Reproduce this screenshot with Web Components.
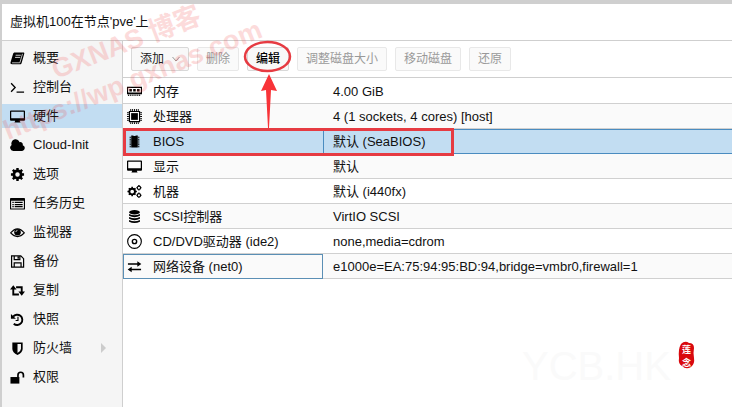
<!DOCTYPE html>
<html lang="zh-CN">
<head>
<meta charset="utf-8">
<meta name="viewport" content="width=device-width, initial-scale=1">
<title>虚拟机100 - 硬件</title>
<style>
  body {
    margin: 0;
    font: 13px/24px "Liberation Sans", "Noto Sans CJK SC", sans-serif;
    color: #111;
    background: #fff;
  }
</style>
</head>
<body>
<kt-vm-panel heading="虚拟机100在节点'pve'上">
  <kt-side-nav slot="nav">
    <kt-nav-item icon="book">概要</kt-nav-item>
    <kt-nav-item icon="terminal">控制台</kt-nav-item>
    <kt-nav-item icon="desktop" active>硬件</kt-nav-item>
    <kt-nav-item icon="cloud">Cloud-Init</kt-nav-item>
    <kt-nav-item icon="gear">选项</kt-nav-item>
    <kt-nav-item icon="list">任务历史</kt-nav-item>
    <kt-nav-item icon="eye">监视器</kt-nav-item>
    <kt-nav-item icon="floppy">备份</kt-nav-item>
    <kt-nav-item icon="retweet">复制</kt-nav-item>
    <kt-nav-item icon="history">快照</kt-nav-item>
    <kt-nav-item icon="shield" expandable>防火墙</kt-nav-item>
    <kt-nav-item icon="unlock">权限</kt-nav-item>
  </kt-side-nav>
  <kt-toolbar slot="toolbar">
    <kt-button menu>添加</kt-button>
    <kt-button disabled>删除</kt-button>
    <kt-button strong>编辑</kt-button>
    <kt-button disabled>调整磁盘大小</kt-button>
    <kt-button disabled>移动磁盘</kt-button>
    <kt-button disabled>还原</kt-button>
  </kt-toolbar>
  <kt-hardware-grid></kt-hardware-grid>
</kt-vm-panel>
<kt-annotations></kt-annotations>

<script>
const icons = {
  book: `<path d="M5 1.500h9.200c.9 0 1.200.6 1 1.300l-2.800 10c-.2.8-.8 1.400-1.700 1.400H2.200C.8 14.200.2 13 .6 12L3.300 3c.3-.9.8-1.500 1.700-1.500z"/><path d="M6 4.500h5.500M5.400 6.800h5.500" stroke="#f5f5f5" stroke-width=".9"/><path d="M2.200 12.600h8.300L13.300 3" stroke="#f5f5f5" stroke-width=".8" fill="none"/>`,
  terminal: `<path d="M1.200 3.500 5.500 8l-4.300 4.500M7 13h8" fill="none" stroke="currentColor" stroke-width="1.400"/>`,
  desktop: `<path fill-rule="evenodd" d="M1 1.500h14q1 0 1 1v9q0 1-1 1h-4.500c0 1 .7 1 .7 2H4.800c0-1 .7-1 .7-2H1q-1 0-1-1v-9q0-1 1-1zm.3 1.300v7h13.400v-7z"/>`,
  cloud: `<path d="M3.500 13.800A3.500 3.500 0 0 1 1.700 7.400 4.500 4.500 0 0 1 10.200 4.400 2.700 2.700 0 0 1 13.600 7.600 3.200 3.200 0 0 1 13 13.800z"/>`,
  gear: `<circle cx="8" cy="8" r="3.900" fill="none" stroke="currentColor" stroke-width="3"/><path d="M8 1v2.500M8 12.500V15M1 8h2.500M12.500 8H15M3 3l2 2M11 11l2 2M13 3l-2 2M5 11l-2 2" stroke="currentColor" stroke-width="2.600"/>`,
  list: `<path fill-rule="evenodd" d="M1 2h14q1 0 1 1v10.500q0 1-1 1H1q-1 0-1-1V3q0-1 1-1zm.2 3v8.300h13.600V5z"/><path d="M2.500 6.800h1.500M5 6.800h8.500M2.500 9.100H4M5 9.100h8.500M2.500 11.400H4M5 11.400h8.500" stroke="currentColor" stroke-width="1.300"/>`,
  eye: `<path d="M.7 8.500Q8-.2 15.300 8.500 8 16.300.7 8.500z" fill="none" stroke="currentColor" stroke-width="1.200"/><circle cx="8" cy="7.700" r="3.500"/><path d="M6.200 7.500A2 2 0 0 1 8 5.700" fill="none" stroke="#fff" stroke-width=".8"/>`,
  floppy: `<path d="M1.700 2h9.800l3 3v9H1.700zM4.500 2v4h6V2M4.500 14V9.500h7.300V14" fill="none" stroke="currentColor" stroke-width="1.300"/><path d="M8 2.500h1.500v2.500H8z"/>`,
  retweet: `<path d="M3.500 5.500v6.800h6M6.500 4.500h6v6" fill="none" stroke="currentColor" stroke-width="2"/><path d="M3.500 2.500 7 7H0zM12.500 13.500 9 9h7z"/>`,
  history: `<path d="M3.300 5A5.500 5.500 0 1 1 4 12.500" fill="none" stroke="currentColor" stroke-width="2"/><path d="M1 2v5.300h5.300z"/><path d="M8.500 5v4H6" fill="none" stroke="currentColor" stroke-width="1.200"/>`,
  shield: `<path fill-rule="evenodd" d="M2.500 1.500h11v7q0 3.500-5.500 6.500-5.500-3-5.500-6.500zm5.500 1.800v9.600q3.700-2.300 3.700-4.600v-5z"/>`,
  unlock: `<path d="M.5 7.500h9.500v7H.5z"/><path d="M8.500 8V5.300a2.900 2.900 0 0 1 5.800 0V8" fill="none" stroke="currentColor" stroke-width="1.800"/>`,
  memory: `<path fill-rule="evenodd" d="M0 3h16v8H0zm1.200 1.200v4.800h13.600V4.200z"/><path d="M2.500 5.200h2.700v2.700H2.500zM6.600 5.200h2.700v2.700H6.600zM10.700 5.200h2.700v2.700h-2.700z"/><path d="M1 12h14" stroke="currentColor" stroke-width="1.500" stroke-dasharray="1 1"/>`,
  cpu: `<path fill-rule="evenodd" d="M2 2h12v12H2zm1.200 1.200v9.600h9.600V3.200z"/><path d="M4.400 4.400h7.200v7.200H4.400z"/><path d="M3.500 1h10M3.500 15h10M1 3.500v10M15 3.500v10" stroke="currentColor" stroke-width="2" stroke-dasharray="1 1"/>`,
  chip: `<path d="M4.500 1.500h2q1.500 1.500 3 0h2v13h-7z"/><path d="M3.500 3v11M12.500 3v11" stroke="currentColor" stroke-width="1.500" stroke-dasharray="1 1"/>`,
  gears: `<circle cx="5.500" cy="8" r="3" fill="none" stroke="currentColor" stroke-width="2"/><path d="M5.500 3v2M5.500 11v2M.5 8h2M8.500 8h2M2 4.500l1.300 1.300M7.700 10.200 9 11.500M9 4.500 7.700 5.800M3.300 10.200 2 11.500" stroke="currentColor" stroke-width="1.700"/><circle cx="12.700" cy="4" r="1.800" fill="none" stroke="currentColor" stroke-width="1.200"/><circle cx="12.700" cy="12" r="1.800" fill="none" stroke="currentColor" stroke-width="1.200"/><path d="M12.700 1v1M12.700 6v1M12.700 9v1M12.700 14v1M10 4h1M14.500 4h1M10 12h1M14.500 12h1" stroke="currentColor" stroke-width="1.300"/>`,
  database: `<ellipse cx="8" cy="3.500" rx="5.800" ry="2.400"/><path d="M2.200 5.300q5.800 2.800 11.600 0v2q-5.800 2.800-11.600 0zM2.200 8.500q5.800 2.800 11.600 0v2q-5.800 2.800-11.600 0zM2.200 11.700q5.800 2.800 11.600 0v1.800q-5.800 2.800-11.600 0z"/>`,
  disc: `<circle cx="8" cy="8" r="7.300" fill="none" stroke="currentColor" stroke-width="1.200"/><circle cx="8" cy="8" r="2.300" fill="none" stroke="currentColor" stroke-width="1.500"/>`,
  exchange: `<path d="M1 5.300h11M4 11.200h11" stroke="currentColor" stroke-width="1.700"/><path d="M11 2.300 15.300 5.300 11 8.300zM5 8.200.7 11.200 5 14.200z"/>`
};

// name, icon, value
const hardware = [
  { name: "内存", icon: "memory", value: "4.00 GiB" },
  { name: "处理器", icon: "cpu", value: "4 (1 sockets, 4 cores) [host]" },
  { name: "BIOS", icon: "chip", value: "默认 (SeaBIOS)", state: "selected" },
  { name: "显示", icon: "desktop", value: "默认" },
  { name: "机器", icon: "gears", value: "默认 (i440fx)" },
  { name: "SCSI控制器", icon: "database", value: "VirtIO SCSI" },
  { name: "CD/DVD驱动器 (ide2)", icon: "disc", value: "none,media=cdrom" },
  { name: "网络设备 (net0)", icon: "exchange", value: "e1000e=EA:75:94:95:BD:94,bridge=vmbr0,firewall=1", state: "focused" }
];

class Icon extends HTMLElement {
  connectedCallback() {
    const shadow = this.attachShadow({ mode: "open" });
    shadow.innerHTML = `
      <style>
        :host { display: block; flex: none; width: 15px; height: 15px; color: #000; }
        svg { display: block; width: 100%; height: 100%; fill: currentColor; }
      </style>
      <svg viewBox="0 0 16 16" aria-hidden="true">${icons[this.getAttribute("name")]}</svg>
    `;
  }
}
customElements.define("kt-icon", Icon);

const panelTemplate = document.createElement("template");
panelTemplate.innerHTML = `
  <style>
    :host {
      display: flex;
      flex-direction: column;
      box-sizing: border-box;
      min-height: 100vh;
      border-top: 4px solid #cfcfcf;
      border-left: 2px solid #cfcfcf;
    }
    h1 {
      margin: 0;
      padding: 6px 8px;
      font: inherit;
      border-bottom: 1px solid #cfcfcf;
    }
    .body {
      flex: auto;
      display: flex;
    }
    main {
      flex: 1;
      min-width: 0;
    }
  </style>
  <h1></h1>
  <div class="body">
    <slot name="nav"></slot>
    <main>
      <slot name="toolbar"></slot>
      <slot></slot>
    </main>
  </div>
`;

class VmPanel extends HTMLElement {
  constructor() {
    super();
    const shadow = this.attachShadow({ mode: "open" });
    shadow.appendChild(panelTemplate.content.cloneNode(true));
  }

  connectedCallback() {
    this.shadowRoot.querySelector("h1").textContent = this.getAttribute("heading");
  }
}
customElements.define("kt-vm-panel", VmPanel);

const navTemplate = document.createElement("template");
navTemplate.innerHTML = `
  <style>
    :host {
      display: block;
      flex: none;
      width: 120px;
      background: #f5f5f5;
      border-right: 1px solid #cfcfcf;
    }
    nav {
      display: flex;
      flex-direction: column;
      gap: 5px;
      padding: 5px 0;
    }
  </style>
  <nav><slot></slot></nav>
`;

class SideNav extends HTMLElement {
  constructor() {
    super();
    const shadow = this.attachShadow({ mode: "open" });
    shadow.appendChild(navTemplate.content.cloneNode(true));
  }
}
customElements.define("kt-side-nav", SideNav);

class NavItem extends HTMLElement {
  connectedCallback() {
    const shadow = this.attachShadow({ mode: "open" });
    shadow.innerHTML = `
      <style>
        :host { display: block; }
        :host([active]) { background: #c2ddf2; }
        a {
          display: flex;
          align-items: center;
          gap: 8px;
          height: 24px;
          padding: 0 16px 0 8px;
          color: inherit;
          text-decoration: none;
        }
        span { flex: auto; }
        i {
          border: 5px solid transparent;
          border-left-color: #ccc;
          border-right: 0;
        }
      </style>
      <a href="#${this.getAttribute("icon")}">
        <kt-icon name="${this.getAttribute("icon")}"></kt-icon>
        <span><slot></slot></span>
        ${this.hasAttribute("expandable") ? "<i></i>" : ""}
      </a>
    `;
  }
}
customElements.define("kt-nav-item", NavItem);

const toolbarTemplate = document.createElement("template");
toolbarTemplate.innerHTML = `
  <style>
    :host {
      display: flex;
      flex-wrap: wrap;
      gap: 8px;
      padding: 6px 8px;
      border-bottom: 1px solid #cfcfcf;
    }
  </style>
  <slot></slot>
`;

class Toolbar extends HTMLElement {
  constructor() {
    super();
    const shadow = this.attachShadow({ mode: "open" });
    shadow.appendChild(toolbarTemplate.content.cloneNode(true));
  }
}
customElements.define("kt-toolbar", Toolbar);

class Button extends HTMLElement {
  connectedCallback() {
    const shadow = this.attachShadow({ mode: "open" });
    const menu = this.hasAttribute("menu");
    shadow.innerHTML = `
      <style>
        :host { display: block; }
        button {
          display: flex;
          align-items: center;
          gap: 8px;
          height: 24px;
          padding: 0 8px;
          font: inherit;
          font-size: 12px;
          line-height: 22px;
          color: #222;
          background: #f8f8f8;
          border: 1px solid #d8d8d8;
          border-radius: 2px;
        }
        button:disabled { color: #999; border-color: #e8e8e8; background: #fafafa; }
        :host([strong]) button { color: #000; font-weight: 500; }
        svg { width: 8px; height: 6px; fill: none; stroke: #999; }
      </style>
      <button type="button" ${this.hasAttribute("disabled") ? "disabled" : ""}>
        <slot></slot>
        ${menu ? `<svg viewBox="0 0 8 6" aria-hidden="true"><path d="M.5 1 4 5l3.500-4"/></svg>` : ""}
      </button>
    `;
  }
}
customElements.define("kt-button", Button);

class HardwareGrid extends HTMLElement {
  constructor() {
    super();
    const shadow = this.attachShadow({ mode: "open" });
    shadow.innerHTML = `
      <style>
        :host { display: block; padding-top: 1px; }
        table {
          width: 100%;
          table-layout: fixed;
          border-collapse: separate;
          border-spacing: 0;
        }
        th, td {
          box-sizing: border-box;
          height: 25px;
          padding: 0 10px;
          font-weight: normal;
          line-height: 23px;
          text-align: left;
          white-space: nowrap;
          border-bottom: 1px solid #d0d0d0;
        }
        th { width: 200px; padding: 0 4px; }
        th div { display: flex; align-items: center; gap: 11px; }
        tr:nth-child(even) > * { background: #fafafa; }
        tr.selected > * {
          background: #c2ddf2;
          border-top: 1px solid #4a8cc0;
          border-bottom-color: #4a8cc0;
        }
        tr.selected td { box-shadow: inset 1px 0 #4a8cc0; }
        tr.focused th {
          border-bottom-color: #5b8fb5;
          box-shadow: inset 1px 1px #5b8fb5, inset -1px 0 #5b8fb5;
        }
      </style>
      <table>
        <tbody>
          ${hardware.map(row => `
            <tr class="${row.state || ""}">
              <th scope="row"><div><kt-icon name="${row.icon}"></kt-icon>${row.name}</div></th>
              <td>${row.value}</td>
            </tr>`).join("")}
        </tbody>
      </table>
    `;
  }
}
customElements.define("kt-hardware-grid", HardwareGrid);

// marker shapes and watermarks lying over the panel
const annotationsTemplate = document.createElement("template");
annotationsTemplate.innerHTML = `
  <style>
    :host {
      position: absolute;
      top: 0;
      left: 0;
      pointer-events: none;
    }
    svg { display: block; }
    .mark { font: bold 27px "Liberation Sans", "Noto Sans CJK SC", sans-serif; fill: #f03c3c; opacity: .18; }
    .site { font: 40px "Liberation Sans", sans-serif; fill: #fafafa; }
    .seal { font: bold 9px "Noto Sans CJK SC", sans-serif; fill: #fff; }
  </style>
  <svg width="732" height="407" viewBox="0 0 732 407">
    <g class="mark">
      <text transform="translate(56 79) rotate(-21)">GXNAS 博客</text>
      <text transform="translate(8 140) rotate(-22)">https://wp.gxnas.com</text>
    </g>
    <g fill="none" stroke="#e63b42" stroke-width="3">
      <rect x="124.500" y="129.500" width="328" height="25"/>
      <ellipse cx="267.500" cy="56.500" rx="22.500" ry="14.500" stroke-width="2.500"/>
    </g>
    <path d="M269 74l8 17-6-1-2 38h-1l-2-38-5 1z" fill="#f83338"/>
    <text class="site" x="522" y="380">YCB.HK</text>
    <path d="M681 344q4-4 8-1 5 0 5 5-1 5 0 10 1 6-3 9-5 3-9-1-4-2-3-8-1-9 2-14z" fill="#d9090e"/>
    <text class="seal" x="682" y="353">莲</text>
    <text class="seal" x="682" y="366">念</text>
  </svg>
`;

class Annotations extends HTMLElement {
  constructor() {
    super();
    const shadow = this.attachShadow({ mode: "open" });
    shadow.appendChild(annotationsTemplate.content.cloneNode(true));
  }
}
customElements.define("kt-annotations", Annotations);
</script>
</body>
</html>
